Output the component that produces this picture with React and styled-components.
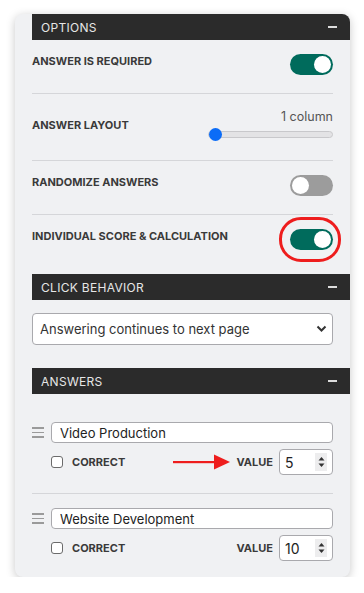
import React from "react";
import styled, { createGlobalStyle } from "styled-components";

const Global = createGlobalStyle`
  html, body { margin: 0; padding: 0; background: #ffffff; }
  body { font-family: Inter, "Noto Sans", Arial, sans-serif; }
  * { box-sizing: border-box; }
`;

const Page = styled.div`
  padding: 14px 0 0 15px;
`;

const Panel = styled.div`
  width: 335px;
  background: #f0f1f3;
  border-radius: 8px;
  box-shadow: 0 2px 10px rgba(0, 0, 0, 0.22);
  overflow: hidden;
  padding: 0 17px 0 17px;
`;

const Header = styled.div`
  height: 26px;
  margin-right: -17px;
  background: #2b2b2b;
  color: #e6e6e6;
  display: flex;
  align-items: center;
  justify-content: space-between;
  padding: 0 13px 0 9px;
  font-size: 12px;
  letter-spacing: 0.3px;
`;

const Minus = styled.span`
  width: 9px;
  height: 1.5px;
  background: #dcdcdc;
`;

const Section = styled.div`
  margin-bottom: ${(p) => p.$after || 0}px;
`;

const Row = styled.div`
  display: flex;
  justify-content: space-between;
  align-items: ${(p) => (p.$center ? "center" : "flex-start")};
  padding: ${(p) => p.$pad};
  border-bottom: ${(p) => (p.$divider ? "1px solid #d5d6d9" : "none")};
`;

const Label = styled.span`
  font-size: 11px;
  line-height: 14px;
  font-weight: 700;
  letter-spacing: 0;
  color: #3a3a3a;
`;

const ToggleWrap = styled.span`
  position: relative;
  display: inline-flex;
`;

const Track = styled.span`
  width: 43px;
  height: 21px;
  border-radius: 11px;
  background: ${(p) => (p.$on ? "#006b5c" : "#9c9c9c")};
  display: flex;
  align-items: center;
  justify-content: ${(p) => (p.$on ? "flex-end" : "flex-start")};
  padding: 0 2px;
`;

const Knob = styled.span`
  width: 17px;
  height: 17px;
  border-radius: 50%;
  background: #ffffff;
`;

const Highlight = styled.span`
  position: absolute;
  left: -11px;
  right: -8px;
  top: -12px;
  bottom: -12px;
  border: 3px solid #ee1d1d;
  border-radius: 22px;
  pointer-events: none;
`;

const Toggle = ({ on, highlight }) => (
  <ToggleWrap>
    <Track $on={on}>
      <Knob />
    </Track>
    {highlight && <Highlight />}
  </ToggleWrap>
);

const SliderCol = styled.div`
  display: flex;
  flex-direction: column;
  align-items: flex-end;
  gap: 3px;
`;

const SliderValue = styled.span`
  font-size: 12.5px;
  line-height: 16px;
  color: #555555;
`;

const Range = styled.input`
  -webkit-appearance: none;
  appearance: none;
  width: 125px;
  height: 13px;
  margin: 0;
  background: transparent;
  &::-webkit-slider-runnable-track {
    height: 7px;
    background: #e3e3e5;
    border: 1px solid #c8c8cb;
    border-radius: 4px;
  }
  &::-webkit-slider-thumb {
    -webkit-appearance: none;
    width: 13px;
    height: 13px;
    border-radius: 50%;
    background: #0b6cf7;
    border: none;
    margin-top: -4px;
  }
`;

const SelectWrap = styled.div`
  position: relative;
  margin: 13px 0 23px;
`;

const Select = styled.select`
  -webkit-appearance: none;
  appearance: none;
  width: 100%;
  height: 32px;
  border: 1px solid #a9a9ad;
  border-radius: 4px;
  background: #ffffff;
  font-family: Inter, "Noto Sans", Arial, sans-serif;
  font-size: 13px;
  color: #333333;
  padding: 0 24px 0 7px;
`;

const Chevron = styled.svg`
  position: absolute;
  right: 6px;
  top: 12px;
  pointer-events: none;
`;

const AnswerList = styled.div`
  padding-top: 13px;
`;

const Answer = styled.div`
  display: grid;
  grid-template-columns: 19px 1fr;
  row-gap: 6px;
  padding: ${(p) => (p.$first ? 15 : 14)}px 0 ${(p) => (p.$last ? 16 : 18)}px;
  border-bottom: ${(p) => (p.$last ? "none" : "1px solid #d5d6d9")};
`;

const Handle = styled.span`
  display: flex;
  flex-direction: column;
  justify-content: center;
  gap: 3px;
  width: 12px;
  & > i {
    display: block;
    height: 1.5px;
    background: #9a9a9a;
  }
`;

const TextField = styled.input`
  height: 21px;
  width: 100%;
  border: 1px solid #a9a9ad;
  border-radius: 4px;
  background: #ffffff;
  font-family: Inter, "Noto Sans", Arial, sans-serif;
  font-size: 13px;
  color: #222222;
  padding: 0 8px;
`;

const Controls = styled.div`
  grid-column: 2;
  display: flex;
  align-items: center;
`;

const Check = styled.input`
  -webkit-appearance: none;
  appearance: none;
  width: 12px;
  height: 12px;
  margin: 0 9px 0 0;
  border: 1px solid #6b6b6b;
  border-radius: 3px;
  background: #ffffff;
`;

const ValueGroup = styled.div`
  margin-left: auto;
  display: flex;
  align-items: center;
  gap: 6px;
`;

const NumberBox = styled.div`
  width: 54px;
  height: 26px;
  border: 1px solid #a9a9ad;
  border-radius: 4px;
  background: #ffffff;
  display: flex;
  align-items: center;
  padding: 0 5px 0 5px;
`;

const NumberText = styled.input`
  width: 28px;
  border: none;
  background: transparent;
  padding: 0;
  font-family: Inter, "Noto Sans", Arial, sans-serif;
  font-size: 14px;
  color: #222222;
  outline: none;
`;

const Spinner = styled.span`
  margin-left: auto;
  width: 12px;
  height: 18px;
  background: #ededee;
  display: flex;
  align-items: center;
  justify-content: center;
`;

const Arrow = () => (
  <svg width="57" height="16" viewBox="0 0 57 16">
    <rect x="0" y="7" width="42" height="2.2" fill="#ee1d1d" />
    <polygon points="41,0.5 57,8 41,15.5" fill="#ee1d1d" />
  </svg>
);

const AnswerItem = ({ text, value, arrow, first, last }) => (
  <Answer $first={first} $last={last}>
    <Handle>
      <i />
      <i />
      <i />
    </Handle>
    <TextField defaultValue={text} />
    <Controls>
      <Check type="checkbox" />
      <Label>CORRECT</Label>
      <ValueGroup>
        {arrow && <Arrow />}
        <Label>VALUE</Label>
        <NumberBox>
          <NumberText defaultValue={value} />
          <Spinner>
            <svg width="7" height="12" viewBox="0 0 7 12">
              <polygon points="3.5,1 6.5,4.5 0.5,4.5" fill="#333" />
              <polygon points="0.5,7.5 6.5,7.5 3.5,11" fill="#333" />
            </svg>
          </Spinner>
        </NumberBox>
      </ValueGroup>
    </Controls>
  </Answer>
);

const HeaderBar = ({ title }) => (
  <Header>
    <span>{title}</span>
    <Minus />
  </Header>
);

export default function App() {
  return (
    <Page>
      <Global />
      <Panel>
        <HeaderBar title="OPTIONS" />
        <Section $after={6}>
          <Row $divider $pad="14px 0 18px">
            <Label>ANSWER IS REQUIRED</Label>
            <Toggle on />
          </Row>
          <Row $divider $center $pad="15px 0 19px">
            <Label>ANSWER LAYOUT</Label>
            <SliderCol>
              <SliderValue>1 column</SliderValue>
              <Range type="range" min="1" max="4" defaultValue="1" />
            </SliderCol>
          </Row>
          <Row $divider $pad="14px 0 18px">
            <Label>RANDOMIZE ANSWERS</Label>
            <Toggle />
          </Row>
          <Row $pad="14px 0 18px">
            <Label>INDIVIDUAL SCORE &amp; CALCULATION</Label>
            <Toggle on highlight />
          </Row>
        </Section>
        <HeaderBar title="CLICK BEHAVIOR" />
        <SelectWrap>
          <Select defaultValue="next">
            <option value="next">Answering continues to next page</option>
          </Select>
          <Chevron width="11" height="8" viewBox="0 0 11 8">
            <polyline points="1.5,1.5 5.5,5.5 9.5,1.5" fill="none" stroke="#333" strokeWidth="2" />
          </Chevron>
        </SelectWrap>
        <HeaderBar title="ANSWERS" />
        <AnswerList>
          <AnswerItem text="Video Production" value="5" arrow first />
          <AnswerItem text="Website Development" value="10" last />
        </AnswerList>
      </Panel>
    </Page>
  );
}
